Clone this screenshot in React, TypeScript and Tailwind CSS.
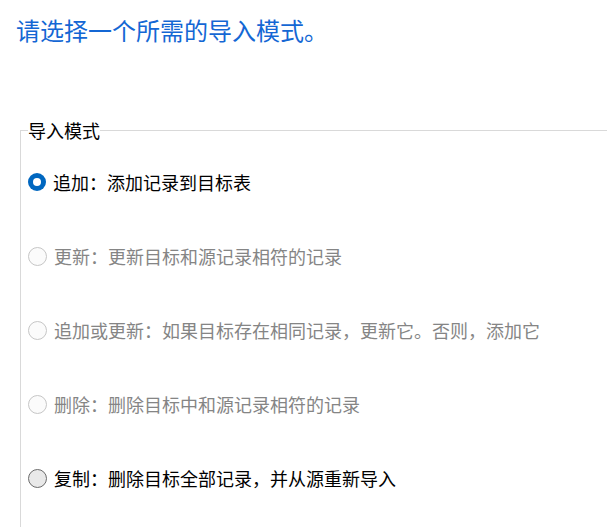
import React from "react";

type Opt = { label: string; state: "selected" | "disabled" | "normal" };

const options: Opt[] = [
  { label: "追加：添加记录到目标表", state: "selected" },
  { label: "更新：更新目标和源记录相符的记录", state: "disabled" },
  { label: "追加或更新：如果目标存在相同记录，更新它。否则，添加它", state: "disabled" },
  { label: "删除：删除目标中和源记录相符的记录", state: "disabled" },
  { label: "复制：删除目标全部记录，并从源重新导入", state: "normal" },
];

function Radio({ state }: { state: Opt["state"] }) {
  if (state === "selected") {
    return (
      <span className="flex h-[18px] w-[18px] shrink-0 items-center justify-center rounded-full bg-[#0067c0]">
        <span className="h-[8px] w-[8px] rounded-full bg-white" />
      </span>
    );
  }
  if (state === "disabled") {
    return <span className="h-[19px] w-[19px] shrink-0 rounded-full border border-[#c6c6c6] bg-[#fbfbfb]" />;
  }
  return <span className="h-[19px] w-[19px] shrink-0 rounded-full border border-[#6b6b6b] bg-[#e9e9e9]" />;
}

export default function App() {
  return (
    <div
      className="h-[527px] w-[607px] overflow-hidden bg-white"
      style={{ fontFamily: '"Noto Sans CJK SC", "Noto Sans", sans-serif' }}
    >
      <div className="pl-4 pt-[15px] text-[24px] leading-[30px] text-[#1467d4]">
        请选择一个所需的导入模式。
      </div>
      <fieldset className="ml-5 mt-[73px] w-[700px] border-l border-t border-[#d9d9d9] pb-10">
        <legend className="ml-[7px] text-[18px] leading-[24px] text-black">导入模式</legend>
        <div className="flex flex-col gap-[50px] pl-[7px] pt-[28px]">
          {options.map((o) => (
            <div key={o.label} className="flex h-6 items-center gap-[7px]">
              <Radio state={o.state} />
              <span
                className={
                  "text-[18px] leading-6 " + (o.state === "disabled" ? "text-[#858585]" : "text-black")
                }
              >
                {o.label}
              </span>
            </div>
          ))}
        </div>
      </fieldset>
    </div>
  );
}
